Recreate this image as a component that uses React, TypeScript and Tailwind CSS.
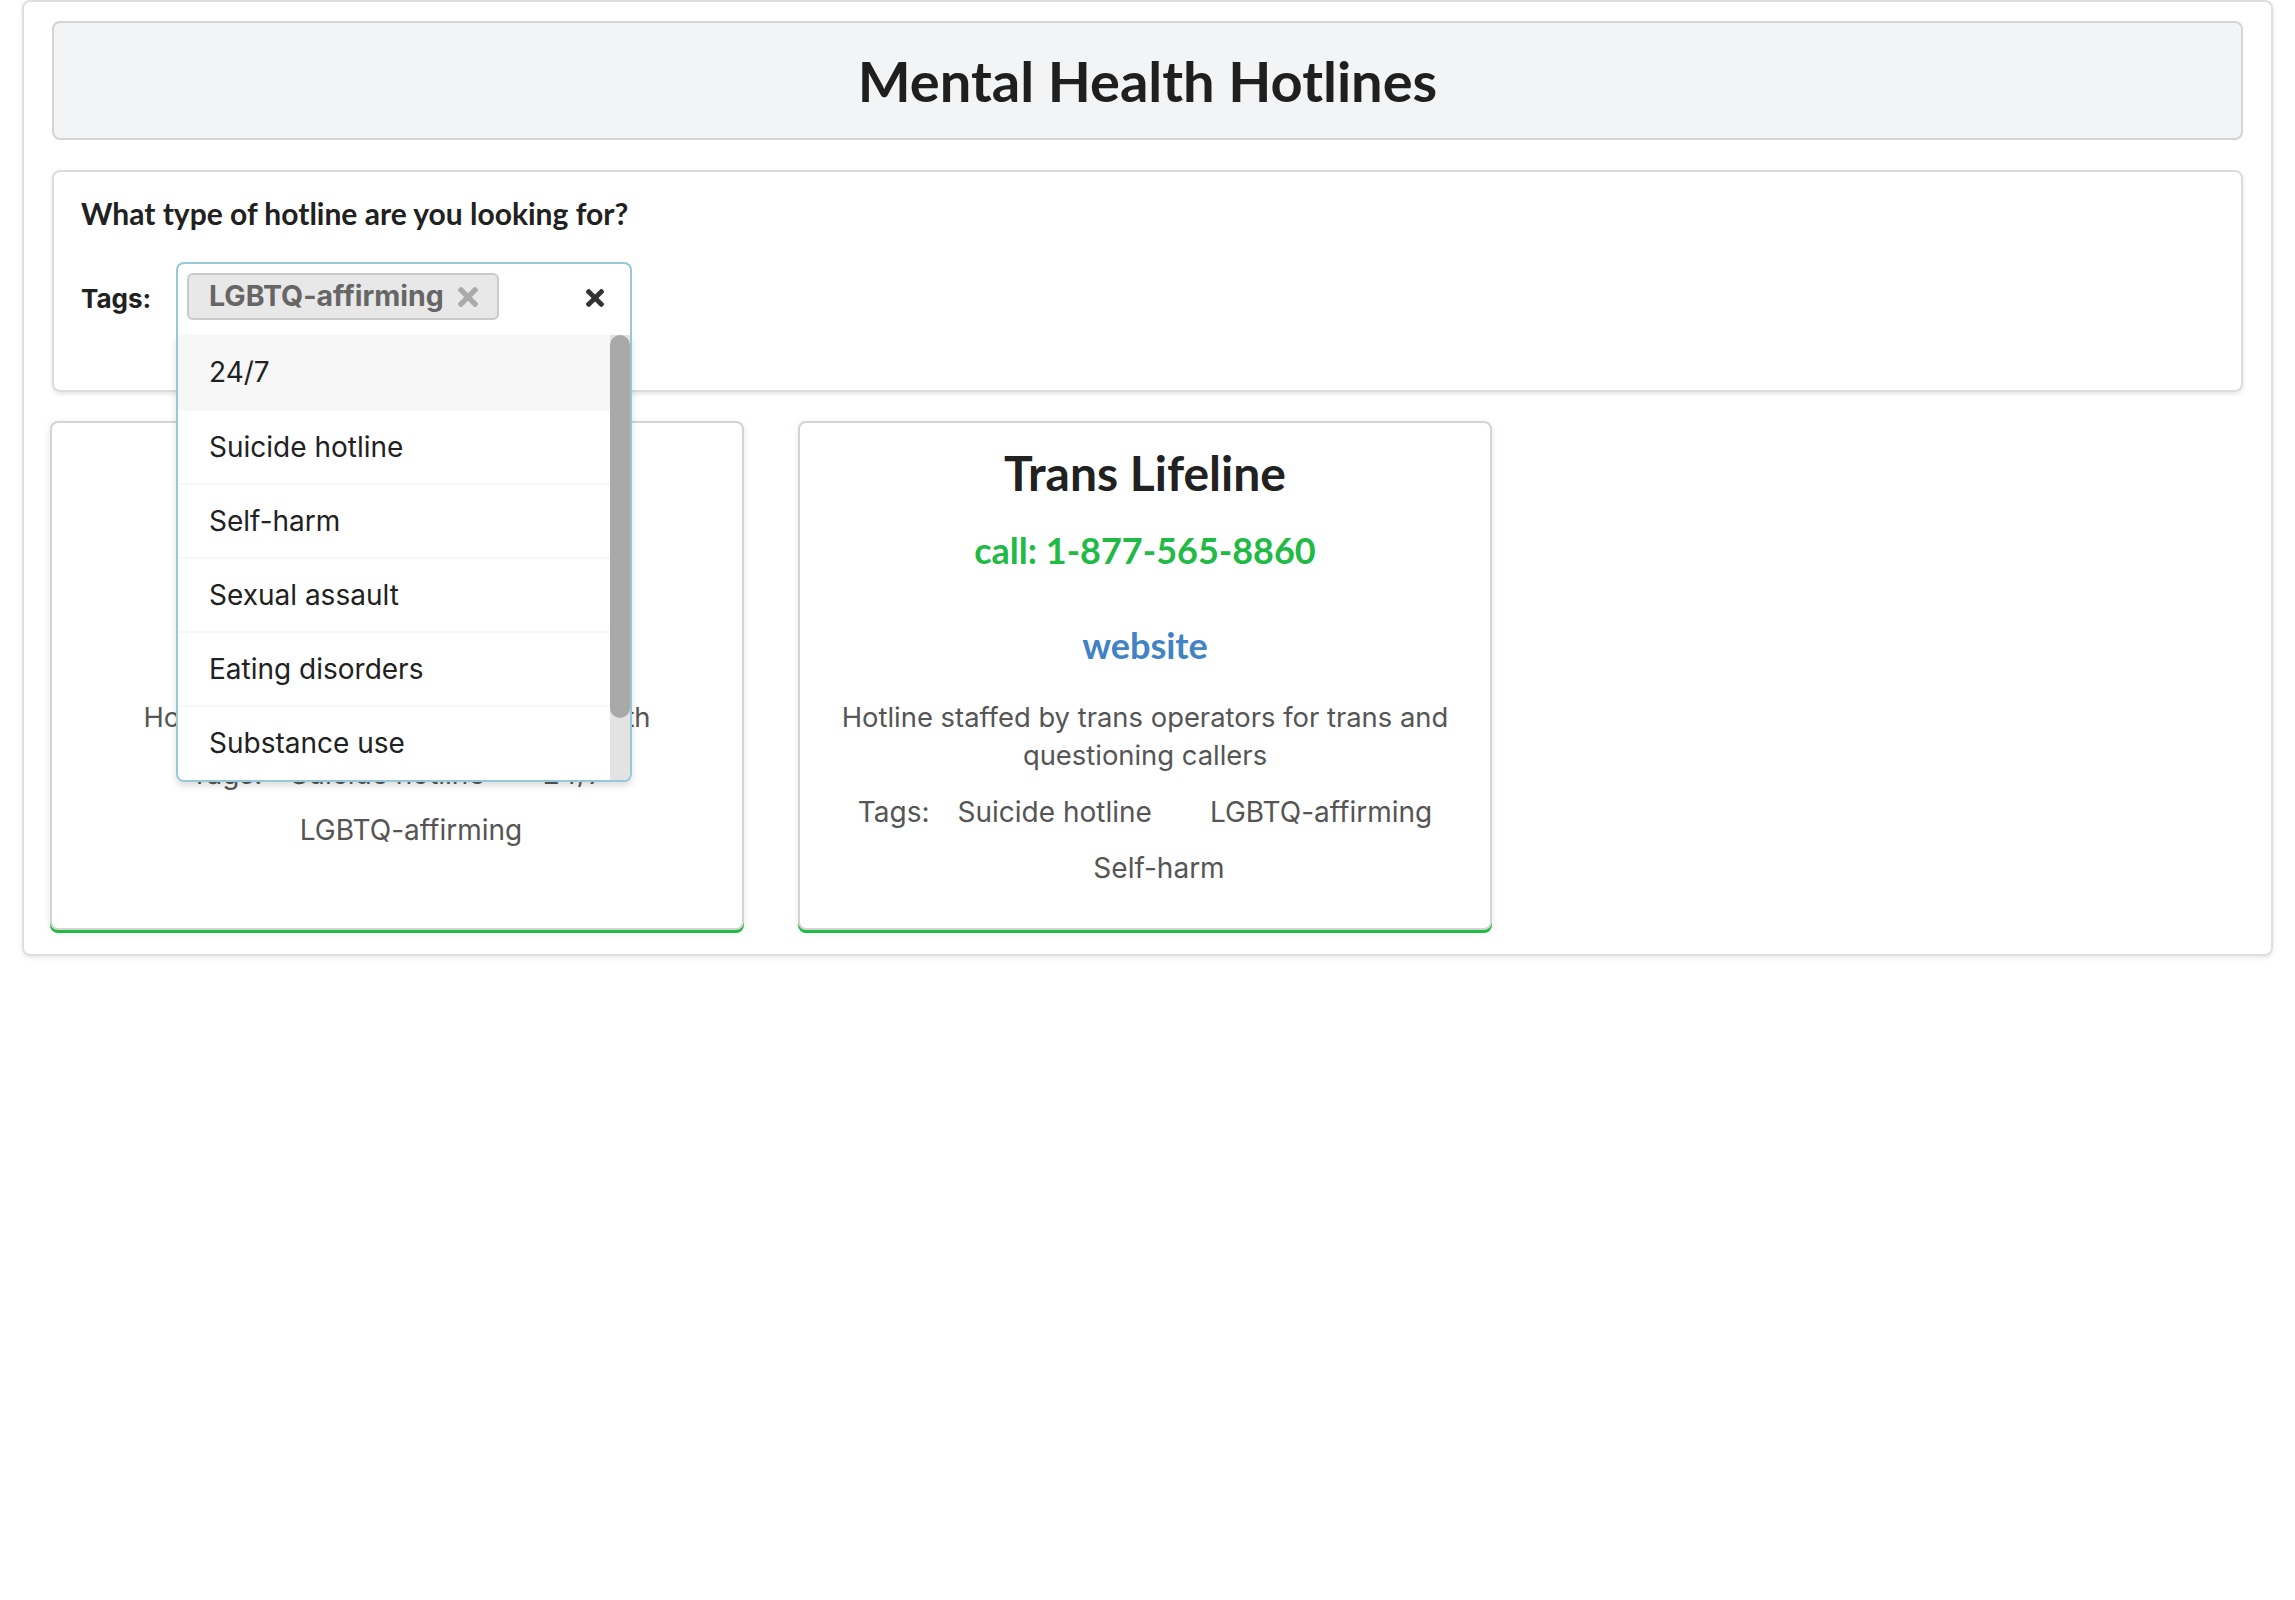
import React from "react";

type Hotline = {
  name: string;
  phone: string;
  description: string;
  tags: string[];
};

const HOTLINES: Hotline[] = [
  {
    name: "The Trevor Project",
    phone: "1-866-488-7386",
    description: "Hotline for LGBT and questioning youth",
    tags: ["Suicide hotline", "24/7", "LGBTQ-affirming"],
  },
  {
    name: "Trans Lifeline",
    phone: "1-877-565-8860",
    description:
      "Hotline staffed by trans operators for trans and questioning callers",
    tags: ["Suicide hotline", "LGBTQ-affirming", "Self-harm"],
  },
];

const OPTIONS = [
  "24/7",
  "Suicide hotline",
  "Self-harm",
  "Sexual assault",
  "Eating disorders",
  "Substance use",
];

// Font Awesome "times" glyph, the remove icon Semantic UI uses.
function TimesIcon({ className }: { className?: string }) {
  return (
    <svg viewBox="0 80 352 352" className={className} fill="currentColor" aria-hidden="true">
      <path d="M242.72 256l100.07-100.07c12.28-12.28 12.28-32.19 0-44.48l-22.24-22.24c-12.28-12.28-32.19-12.28-44.48 0L176 189.28 75.93 89.21c-12.28-12.28-32.19-12.28-44.48 0L9.21 111.45c-12.28 12.28-12.28 32.19 0 44.48L109.28 256 9.21 356.07c-12.28 12.28-12.28 32.19 0 44.48l22.24 22.24c12.28 12.28 32.2 12.28 44.48 0L176 322.72l100.07 100.07c12.28 12.28 32.2 12.28 44.48 0l22.24-22.24c12.28-12.28 12.28-32.19 0-44.48L242.72 256z" />
    </svg>
  );
}

function TagSelect() {
  return (
    <div className="relative h-[73px] w-[456px] rounded-t-[8px] border-2 border-b-0 border-[#96c8da] bg-white">
      <div className="flex h-full items-start pl-[9px] pt-[9px]">
        <span className="flex h-[47px] items-center rounded-[6px] bg-[#e8e8e8] pl-[22px] pr-[21px] text-[28.5px] font-bold text-[#666666] shadow-[inset_0_0_0_2px_rgba(34,36,38,0.15)]">
          LGBTQ-affirming
          <TimesIcon className="ml-[14px] h-[20px] w-[20px] text-[#aaaaaa]" />
        </span>
        <TimesIcon className="ml-auto mr-[26px] mt-[16px] h-[18px] w-[18px] text-[#333333]" />
      </div>

      {/* open menu */}
      <div className="absolute left-[-2px] top-full z-10 flex h-[447px] w-[456px] overflow-hidden rounded-b-[8px] border-2 border-t-0 border-[#96c8da] bg-white shadow-[0_4px_6px_0_rgba(34,36,38,0.15)]">
        <ul className="flex-1">
          {OPTIONS.map((opt, i) => (
            <li
              key={opt}
              className={
                i === 0
                  ? "flex h-[74px] items-center bg-[#f7f7f7] px-[31px] text-[28px] text-[#212121]"
                  : "flex h-[74px] items-center border-t-2 border-[#f7f7f7] px-[31px] text-[28px] text-[#212121]"
              }
            >
              {opt}
            </li>
          ))}
        </ul>
        <div className="w-[20px] bg-[#e3e3e3]">
          <div className="h-[383px] rounded-full bg-[#a9a9a9]" />
        </div>
      </div>
    </div>
  );
}

function HotlineCard({ hotline }: { hotline: Hotline }) {
  return (
    <div className="rounded-[8px] border-2 border-[#d4d4d5] bg-white px-[28px] pb-[32px] pt-[22px] text-center shadow-[0_3px_0_0_#21ba45,0_2px_6px_0_rgba(212,212,213,0.6)]">
      <h2 className="font-['Lato',sans-serif] text-[48px] font-bold leading-[56px] text-[#212121]">
        {hotline.name}
      </h2>
      <div className="mt-[27px] font-['Lato',sans-serif] text-[36px] font-bold leading-[44px] text-[#21ba45]">
        call: {hotline.phone}
      </div>
      <a
        href="#"
        className="mt-[51px] block font-['Lato',sans-serif] text-[36px] font-bold leading-[44px] text-[#4183c4]"
      >
        website
      </a>
      <p className="mt-[31px] text-[27.4px] leading-[38px] text-[#555555]">
        {hotline.description}
      </p>
      <div className="-mx-[12px] mt-[10px] flex flex-wrap justify-center pl-[30px] text-[28px] leading-[56px] text-[#555555]">
        <span>Tags:</span>
        {hotline.tags.map((t) => (
          <span key={t} className="ml-[28px] mr-[30px]">
            {t}
          </span>
        ))}
      </div>
    </div>
  );
}

export default function App() {
  return (
    <div className="min-h-screen bg-white font-['Inter',sans-serif]">
      <div className="mx-[22px] rounded-[8px] border-2 border-[#dedede] px-[28px] pb-[24px] pt-[19px] shadow-[0_2px_4px_0_rgba(34,36,38,0.1)]">
        <header className="flex h-[119px] items-center justify-center rounded-[8px] border-2 border-[#d4d4d5] bg-[#f3f4f5]">
          <h1 className="font-['Lato',sans-serif] text-[56px] font-bold leading-[72px] text-[#1f1f1f]">
            Mental Health Hotlines
          </h1>
        </header>

        <section className="mt-[30px] h-[222px] rounded-[8px] border-2 border-[#dcdcdc] pl-[27px] pt-[22px] shadow-[0_2px_4px_0_rgba(34,36,38,0.12)]">
          <h4 className="font-['Lato',sans-serif] text-[30px] font-bold leading-[38px] text-[#212121]">
            What type of hotline are you looking for?
          </h4>
          <div className="mt-[30px] flex items-center">
            <label className="w-[95px] text-[26px] font-bold text-[#212121]">Tags:</label>
            <TagSelect />
          </div>
        </section>

        <div className="-ml-[2px] mt-[29px] grid grid-cols-[repeat(3,694px)] gap-x-[54px]">
          {HOTLINES.map((h) => (
            <HotlineCard key={h.name} hotline={h} />
          ))}
        </div>
      </div>
    </div>
  );
}
